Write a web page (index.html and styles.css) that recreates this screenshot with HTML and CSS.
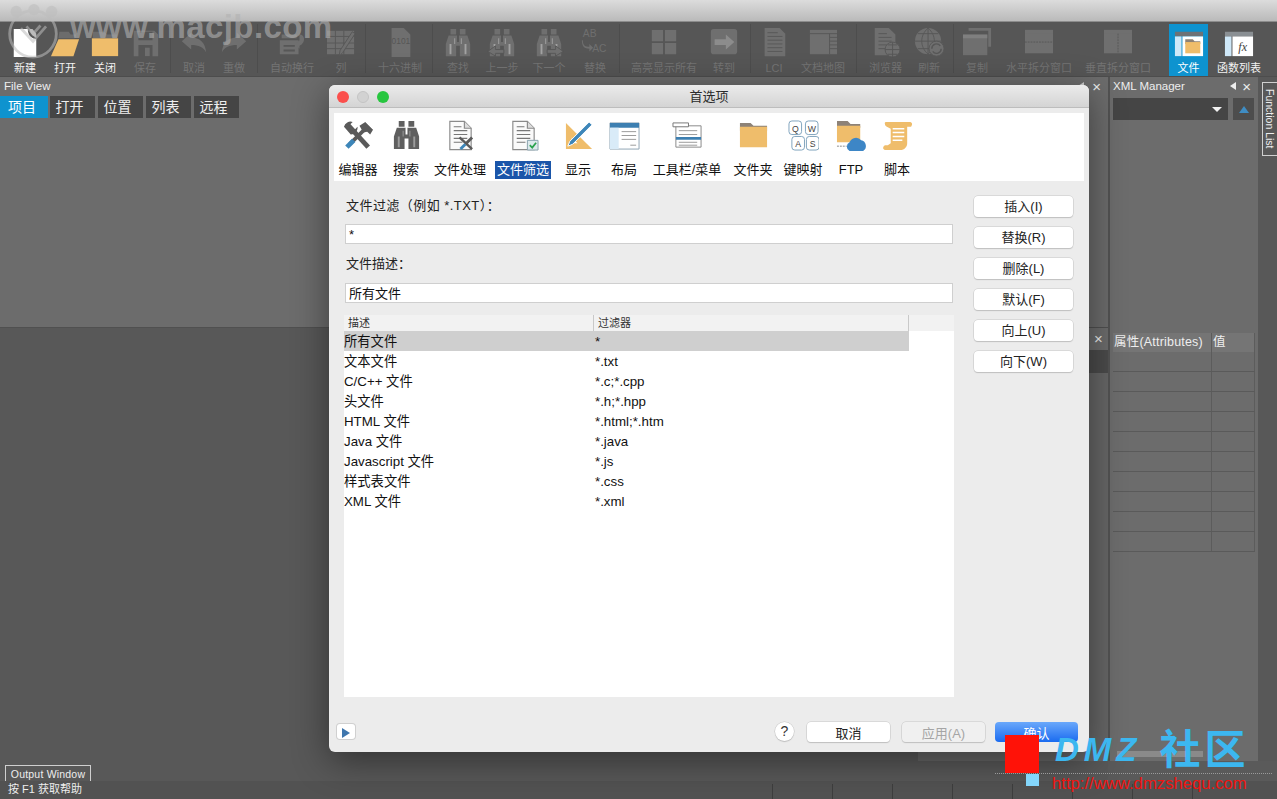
FILE: index.html
```html
<!DOCTYPE html>
<html lang="zh">
<head>
<meta charset="utf-8">
<title>首选项</title>
<link rel="stylesheet" href="styles.css">
</head>
<body>
<svg class="defs" width="0" height="0">
  <symbol id="bino" viewBox="0 0 32 32">
    <path d="M8 1h6v6H8zM18 1h6v6h-6z"/>
    <path d="M6 8h9v7h2V8h9l3 9v13H18V19h-4v11H3V17z"/>
    <path d="M7 17h2v11H7zM23 17h2v11h-2zM12 11h1v6h-1zM19 11h1v6h-1z" fill="#c4c4c4" opacity=".6"/>
  </symbol>
  <symbol id="doc" viewBox="0 0 32 32">
    <path d="M5 1.500h15l7 7v22H5z" fill="#fafafa" stroke="#8a8a8a" stroke-width="1.200"/>
    <path d="M20 1.500v7h7" fill="#ddd" stroke="#8a8a8a" stroke-width="1.200"/>
    <path d="M9 7h8M9 11h14M9 15h14M9 19h14M9 23h9" stroke="#777" stroke-width="1.200"/>
  </symbol>
  <symbol id="fold" viewBox="0 0 32 32">
    <path d="M2 3h11l3 3h14v5H2z" fill="#8d8277"/>
    <path d="M2 7h28v21H2z" fill="#efbd6b"/>
  </symbol>
  <symbol id="pane" viewBox="0 0 32 32">
    <path d="M1 2h30v25H1z"/>
    <path d="M1 2h30v4H1z" opacity=".7"/>
  </symbol>
</svg>

<div class="app">
  <header class="titlebar"></header>

  <nav class="toolbar">
    <div class="tool w40"><svg class="ti" viewBox="0 0 32 32"><path d="M4 1h15c0 6 3 10 9 11v19H4z" fill="#fff"/><path d="M21 1c0 4 3 8 7 9V6l-4-5z" fill="#bbb"/></svg><span>新建</span></div>
    <div class="tool w40"><svg class="ti" viewBox="0 0 32 32"><path d="M10 4h10l2 3h6l-1 4H9z" fill="#6c6c6c"/><path d="M9 12h22l-6 18H1z" fill="#efbd6b"/></svg><span>打开</span></div>
    <div class="tool w40"><svg class="ti" viewBox="0 0 32 32"><path d="M3 4h12l3 3h11v4H3z" fill="#6c6c6c"/><path d="M2 11h28v19H2z" fill="#efbd6b"/></svg><span>关闭</span></div>
    <div class="tool w40 dim"><svg class="ti" viewBox="0 0 32 32"><path fill-rule="evenodd" d="M4 3h22l4 4v23H4zM9 4v9h15V4zM9 18v12h15V18z"/><path d="M16 21h5v9h-5z"/></svg><span>保存</span></div>
    <i class="sep shift-2"></i>
    <div class="tool w40 dim"><svg class="ti" viewBox="0 0 32 32"><path d="M3 14 13 5v5c9 0 15 5 16 16-3-6-8-8-16-8v5z"/></svg><span>取消</span></div>
    <div class="tool w40 dim"><svg class="ti" viewBox="0 0 32 32"><path d="M29 14 19 5v5c-9 0-15 5-16 16 3-6 8-8 16-8v5z"/></svg><span>重做</span></div>
    <i class="sep"></i>
    <div class="tool dim"><svg class="ti" viewBox="0 0 32 32"><path d="M5 7h16v4H5zM3 13h20v15H3z"/><path d="M7 18h12v2H7zM7 23h12v2H7z" fill="#575757"/><path d="M24 7c6 0 7 9 0 12v3l-5-5 5-4z"/></svg><span>自动换行</span></div>
    <div class="tool w40 dim pull-2"><svg class="ti" viewBox="0 0 32 32"><path d="M1 3h29v25H1z"/><path d="M10 3v25M19 3v25M1 9h29M1 16h29M1 22h29" stroke="#575757"/><path d="M31 6 18 26l-4 4 1-6L28 4z" stroke="#575757"/></svg><span>列</span></div>
    <i class="sep shift-1"></i>
    <div class="tool dim"><svg class="ti" viewBox="0 0 32 32"><path d="M7 0h13l7 7v24H7z"/><text x="17" y="17" class="hex">0101</text></svg><span>十六进制</span></div>
    <i class="sep sep-b"></i>
    <div class="tool w44 dim"><svg class="ti"><use href="#bino"/></svg><span>查找</span></div>
    <div class="tool w44 dim"><svg class="ti" viewBox="0 0 32 32"><use href="#bino"/><path d="M1 25 9 19v4h9v4H9v3z" fill="#707070" stroke="#575757"/></svg><span>上一步</span></div>
    <div class="tool w44 dim shift-3"><svg class="ti" viewBox="0 0 32 32"><use href="#bino"/><path d="M31 25l-8-6v4h-9v4h9v3z" fill="#707070" stroke="#575757"/></svg><span>下一个</span></div>
    <div class="tool w44 dim shift-2"><svg class="ti" viewBox="0 0 32 32"><text x="3" y="10" class="abac">AB</text><text x="13" y="26" class="abac">AC</text><path d="M3 13c0 6 3 7 7 7v-3l4 4-4 4v-3c-5 0-8-2-8-9z"/></svg><span>替换</span></div>
    <i class="sep sep-c"></i>
    <div class="tool dim"><svg class="ti" viewBox="0 0 32 32"><path d="M3 2h12v12H3zM17 2h12v12H17zM3 16h12v12H3zM17 16h12v12H17z"/></svg><span>高亮显示所有</span></div>
    <div class="tool w40 dim pull-2"><svg class="ti" viewBox="0 0 32 32"><rect x="2" y="1" width="28" height="27" rx="3"/><path d="M6 12h12V7l9 8-9 8v-5H6z" fill="#8c8c8c"/></svg><span>转到</span></div>
    <i class="sep shift-3"></i>
    <div class="tool w40 dim"><svg class="ti" viewBox="0 0 32 32"><path d="M6 0h16l6 6v24H6z"/><path d="M9 5h11M9 9h16M9 13h16M9 17h16M9 21h16M9 25h16" stroke="#575757"/></svg><span>LCI</span></div>
    <div class="tool dim pull-2"><svg class="ti" viewBox="0 0 32 32"><path d="M2 2h29v26H2z"/><path d="M23 6v22M23 10h8M23 14h8M23 18h8M23 22h8M2 6h29" stroke="#575757"/></svg><span>文档地图</span></div>
    <i class="sep pull-1"></i>
    <div class="tool dim"><svg class="ti" viewBox="0 0 32 32"><path d="M4 0h15l7 7v22H4z"/><path d="M8 6h9M8 10h14M8 14h14M8 18h9M8 22h8" stroke="#575757"/><circle cx="23" cy="23" r="8" stroke="#575757"/><path d="M15 23h16M23 15v16M18 18h10M18 28h10" stroke="#575757"/></svg><span>浏览器</span></div>
    <div class="tool w40 dim pull-2"><svg class="ti" viewBox="0 0 32 32"><circle cx="15" cy="14" r="14"/><path d="M1 14h28M15 0v28M4 6h22M4 22h22M15 0c-9 8-9 20 0 28M15 0c9 8 9 20 0 28" stroke="#575757" fill="none"/><circle cx="24" cy="22" r="8" stroke="#575757"/><path d="M19 22a5 5 0 0 1 9-3M29 22a5 5 0 0 1-9 3" stroke="#575757" fill="none" stroke-width="1.500"/></svg><span>刷新</span></div>
    <i class="sep shift-1"></i>
    <div class="tool w40 dim"><svg class="ti" viewBox="0 0 32 32"><path d="M7 0h24v20h-3V3H7z"/><path d="M1 7h26v22H1z"/><path d="M1 7h26v4H1z" fill="#7f7f7f"/></svg><span>复制</span></div>
    <div class="tool dim"><svg class="ti wide" viewBox="0 0 32 32"><use href="#pane"/><path d="M1 15h30" stroke="#575757" stroke-dasharray="2 1"/></svg><span>水平拆分窗口</span></div>
    <div class="tool dim push pull-5"><svg class="ti wide" viewBox="0 0 32 32"><use href="#pane"/><path d="M16 6v21" stroke="#575757" stroke-dasharray="2 1"/></svg><span>垂直拆分窗口</span></div>
    <div class="tool active"><svg class="ti" viewBox="0 0 32 32"><path d="M1 4h30v5H1z" fill="#6d7276"/><path d="M1 9h7v21H1z" fill="#cfe8f8"/><path d="M9 9h22v21H9z" fill="#fff"/><path d="M12 12h8l2 2h6v3H12z" fill="#8d8277"/><path d="M12 15h16v12H12z" fill="#efbd6b"/></svg><span>文件</span></div>
    <div class="tool"><svg class="ti" viewBox="0 0 32 32"><path d="M1 4h30v5H1z" fill="#8a8f93"/><path d="M1 9h7v21H1z" fill="#cfe8f8"/><path d="M9 9h22v21H9z" fill="#fff"/><text x="20" y="25" class="fx">fx</text></svg><span>函数列表</span></div>
  </nav>

  <main class="workspace">
    <section class="left">
      <div class="file-view">
        <div class="panel-head">
          <span>File View</span>
          <span class="ctl"><i class="tri"></i><i class="x">×</i></span>
        </div>
        <div class="tabs">
          <span class="tab on">项目</span>
          <span class="tab">打开</span>
          <span class="tab">位置</span>
          <span class="tab">列表</span>
          <span class="tab">远程</span>
        </div>
      </div>
      <div class="editor">
        <div class="editor-main">
          <div class="output-row">
            <span class="output-tab">Output Window</span>
            <span class="output-band"></span>
          </div>
        </div>
        <div class="stub">
          <div class="stub-x">×</div>
          <div class="stub-dark"></div>
          <div class="stub-rest"></div>
        </div>
      </div>
    </section>

    <aside class="xml">
      <div class="panel-head">
        <span>XML Manager</span>
        <span class="ctl ctl-xml"><i class="tri tri-w"></i><i class="x">×</i></span>
      </div>
      <div class="xml-select">
        <div class="combo"><i class="down"></i></div>
        <div class="up-btn"><i class="up"></i></div>
      </div>
      <div class="attrs">
        <div class="attr-row attr-head"><span>属性(Attributes)</span><span>值</span></div>
        <div class="attr-row"><span></span><span></span></div>
        <div class="attr-row"><span></span><span></span></div>
        <div class="attr-row"><span></span><span></span></div>
        <div class="attr-row"><span></span><span></span></div>
        <div class="attr-row"><span></span><span></span></div>
        <div class="attr-row"><span></span><span></span></div>
        <div class="attr-row"><span></span><span></span></div>
        <div class="attr-row"><span></span><span></span></div>
        <div class="attr-row"><span></span><span></span></div>
        <div class="attr-row"><span></span><span></span></div>
      </div>
      <div class="hscroll"></div>
    </aside>

    <div class="strip"><span class="fn-tab">Function List</span></div>
  </main>

  <footer class="statusbar">
    <span class="status-text">按 F1 获取帮助</span>
    <div class="cells">
      <i></i><i></i><i></i><i></i><i></i><i></i><i></i><i></i>
    </div>
  </footer>

  <section class="dialog">
    <div class="dlg-title">
      <span class="lights"><i class="red"></i><i class="grey"></i><i class="green"></i></span>
      <span>首选项</span>
    </div>
    <div class="prefs">
      <div class="pref"><svg class="pi" viewBox="0 0 32 32"><path d="M5 5l21 23" stroke="#5a5a5a" stroke-width="5"/><path d="M1 7a7 7 0 0 1 9-5L6 6l1 4 4 1 4-4a7 7 0 0 1-7 8z" fill="#5a5a5a"/><path d="M24 8 7 25" stroke="#5a5a5a" stroke-width="4"/><path d="M11 21 4 28" stroke="#3d86b9" stroke-width="5"/><path d="M17 6l6-4 8 8-3 5-3-3-4 1z" fill="#5a5a5a"/></svg><span>编辑器</span></div>
      <div class="pref"><svg class="pi bino"><use href="#bino"/></svg><span>搜索</span></div>
      <div class="pref"><svg class="pi" viewBox="0 0 32 32"><use href="#doc"/><path d="M15 18l13 12" stroke="#5a5a5a" stroke-width="2.500"/><path d="M28 18 21 25" stroke="#5a5a5a" stroke-width="3"/><path d="M21 25l-5 5" stroke="#3d86b9" stroke-width="3"/></svg><span>文件处理</span></div>
      <div class="pref"><svg class="pi" viewBox="0 0 32 32"><use href="#doc"/><path d="M20 21h11v10H20z" fill="#dce9ec" stroke="#87a1ad"/><path d="M22.500 26l2.500 2.500 4-5" fill="none" stroke="#2ba24f" stroke-width="1.800"/></svg><span class="sel">文件筛选</span></div>
      <div class="pref"><svg class="pi" viewBox="0 0 32 32"><path d="M3 3l27 27H3z" fill="#efbd6b"/><path d="M9 18l6 6H9z" fill="#fff"/><path d="M27 2l3 3L10 25l-5 2 2-5z" fill="#3d86b9" stroke="#fff"/></svg><span>显示</span></div>
      <div class="pref"><svg class="pi" viewBox="0 0 32 32"><path d="M1 3h30v27H1z" fill="#fff" stroke="#90a4b4"/><path d="M1 3h30v5H1z" fill="#3d7fb1"/><path d="M1 8h9v22H1z" fill="#d9ebf8"/><path d="M13 12h15M13 16h15M13 20h15M22 26h6" stroke="#999"/></svg><span>布局</span></div>
      <div class="pref"><svg class="pi" viewBox="0 0 32 32"><path d="M4 6h26v22H4z" fill="#fff" stroke="#888"/><path d="M1 3h16v4H1z" fill="#fff" stroke="#777"/><path d="M7 11h19M7 15h19M7 23h19M7 26h19" stroke="#999"/><path d="M4 17.500h26v3H4z" fill="#3d7fb1"/></svg><span>工具栏/菜单</span></div>
      <div class="pref"><svg class="pi" viewBox="0 0 32 32"><use href="#fold"/></svg><span>文件夹</span></div>
      <div class="pref"><svg class="pi" viewBox="0 0 32 32"><g fill="#fff" stroke="#7fa3bd"><rect x="1" y="1" width="13" height="14" rx="3"/><rect x="18" y="1" width="13" height="14" rx="3"/><rect x="4" y="17" width="13" height="14" rx="3"/><rect x="19" y="17" width="13" height="14" rx="3"/></g><text x="7.500" y="12" class="key">Q</text><text x="24.500" y="12" class="key">W</text><text x="10.500" y="28" class="key">A</text><text x="25.500" y="28" class="key">S</text></svg><span>键映射</span></div>
      <div class="pref"><svg class="pi" viewBox="0 0 32 32"><path d="M1 1h11l3 3h10v4H1z" fill="#8d8277"/><path d="M1 6h24v17H1z" fill="#efbd6b"/><path d="M1 27h10" stroke="#888" stroke-dasharray="2 1"/><path d="M14 32a5 5 0 0 1 0-9 7 7 0 0 1 12-2 6 6 0 0 1 2 11z" fill="#3d86c6"/></svg><span>FTP</span></div>
      <div class="pref"><svg class="pi" viewBox="0 0 32 32"><path d="M4 2h24c3 0 4 2 2 5h-4v17c0 4-3 7-7 7H4c-3 0-4-3-1-5h3l3-2V9L5 7C3 6 2 2 4 2z" fill="#efbd6b"/><path d="M11 9h12M11 13h12M11 17h12M11 21h10" stroke="#fff" stroke-width="1.500"/></svg><span>脚本</span></div>
    </div>

    <div class="dlg-body">
      <div class="form">
        <label class="lbl lbl-wide">文件过滤（例如 *.TXT）：</label>
        <div class="input">*</div>
        <label class="lbl lbl-2">文件描述：</label>
        <div class="input">所有文件</div>
        <div class="table">
          <div class="thead"><span>描述</span><span>过滤器</span><span></span></div>
          <div class="trow selrow"><span>所有文件</span><span>*</span></div>
          <div class="trow"><span>文本文件</span><span>*.txt</span></div>
          <div class="trow"><span>C/C++ 文件</span><span>*.c;*.cpp</span></div>
          <div class="trow"><span>头文件</span><span>*.h;*.hpp</span></div>
          <div class="trow"><span>HTML 文件</span><span>*.html;*.htm</span></div>
          <div class="trow"><span>Java 文件</span><span>*.java</span></div>
          <div class="trow"><span>Javascript 文件</span><span>*.js</span></div>
          <div class="trow"><span>样式表文件</span><span>*.css</span></div>
          <div class="trow"><span>XML 文件</span><span>*.xml</span></div>
        </div>
      </div>
      <div class="side-btns">
        <button class="btn">插入(I)</button>
        <button class="btn">替换(R)</button>
        <button class="btn">删除(L)</button>
        <button class="btn">默认(F)</button>
        <button class="btn">向上(U)</button>
        <button class="btn">向下(W)</button>
      </div>
    </div>

    <div class="dlg-foot">
      <button class="play"><i></i></button>
      <span class="spacer"></span>
      <button class="help">?</button>
      <button class="btn foot-btn">取消</button>
      <button class="btn foot-btn off">应用(A)</button>
      <button class="btn foot-btn primary">确认</button>
    </div>
  </section>

  <div class="wm-macjb">
    <svg class="wm-logo" viewBox="0 0 60 60"><g fill="none" stroke="#bdbdbd" stroke-width="3"><circle cx="30" cy="32" r="25"/><path d="M17 26l13 14 14-16M23 24l7 8 8-9"/></g><g fill="#bdbdbd"><circle cx="12" cy="8" r="6"/><circle cx="31" cy="6" r="6"/><circle cx="50" cy="8" r="6"/></g></svg>
    <span>www.macjb.com</span>
  </div>

  <div class="wm-dmz">
    <i class="wm-red"></i>
    <i class="wm-blue"></i>
    <span class="wm-line"></span>
    <span class="wm-name"><b>DMZ</b><em>社区</em></span>
    <span class="wm-url">http://www.dmzshequ.com</span>
  </div>
</div>
</body>
</html>
```

FILE: styles.css
```css
* { box-sizing: border-box; }
html, body { margin: 0; padding: 0; }
body {
  font-family: "Liberation Sans", "Noto Sans CJK SC", sans-serif;
  background: #5a5a5a;
  overflow: hidden;
}
i { font-style: normal; display: block; }
.defs { position: absolute; }

.app {
  position: relative;
  width: 1277px;
  height: 799px;
  display: flex;
  flex-direction: column;
  overflow: hidden;
  background: #5a5a5a;
}
.titlebar {
  height: 22px;
  flex: none;
  background: linear-gradient(#dcdcdc, #bababa);
  border-bottom: 1px solid #8c8c8c;
}

/* toolbar */
.toolbar {
  height: 55px;
  flex: none;
  display: flex;
  padding-left: 5px;
  background: #565656;
  border-bottom: 1px solid #4d4d4d;
}
.tool {
  display: flex;
  flex-direction: column;
  align-items: center;
  padding: 6px 9px 0;
  color: #f2f2f2;
  font-size: 11px;
  line-height: 16px;
}
.tool span { margin-top: 2px; white-space: nowrap; }
.w40 { width: 40px; padding-left: 0; padding-right: 0; }
.w44 { width: 44px; padding-left: 0; padding-right: 0; }
.ti { width: 30px; height: 30px; fill: currentColor; flex: none; }
.ti.wide { width: 32px; }
.tool.dim { color: #747474; }
.tool.dim .ti { fill: #6f6f6f; }
.tool.active { background: #0e93cf; color: #fff; width: 39px; padding-left: 0; padding-right: 0; margin-top: 2px; padding-top: 4px; }
.push { margin-right: 9px; }
.sep { width: 1px; margin: 2px 3px 3px; background: #4d4d4d; flex: none; }
.sep-b { margin-left: 1px; margin-right: 3px; }
.sep-c { margin-left: 2px; margin-right: 2px; }
.shift-1 { margin-left: 4px; }
.shift-2 { margin-left: 2px; }
.shift-3 { margin-left: 3px; }
.sep.shift-2 { margin-left: 5px; }
.sep.shift-3 { margin-left: 6px; }
.pull-1 { margin-left: 2px; }
.pull-2 { margin-left: -2px; }
.pull-5 { margin-left: -5px; }
.hex { font: 9px "Liberation Sans", sans-serif; fill: #565656; text-anchor: middle; }
.abac { font: 11px "Liberation Sans", sans-serif; fill: #6f6f6f; }
.fx { font: italic 13px "Liberation Serif", serif; fill: #444; text-anchor: middle; }

/* workspace */
.workspace { flex: 1; display: flex; min-height: 0; }
.left { width: 1108px; display: flex; flex-direction: column; flex: none; }
.file-view { height: 251px; flex: none; background: #6c6c6c; border-bottom: 1px solid #505050; }
.panel-head {
  height: 18px;
  display: flex;
  justify-content: space-between;
  align-items: center;
  padding: 0 7px 0 4px;
  color: #eee;
  font-size: 11.500px;
}
.ctl { display: flex; align-items: center; gap: 8px; }
.tri { width: 0; height: 0; border: 4px solid transparent; border-right: 6px solid #ccc; border-left: 0; }
.tri-w { border-right-color: #eee; }
.x { color: #eee; font-size: 15px; line-height: 15px; }
.tabs { display: flex; gap: 3px; margin-top: 1px; }
.tab {
  width: 45px;
  height: 22px;
  padding-right: 6px;
  background: #454545;
  color: #eee;
  font-size: 14px;
  line-height: 22px;
  text-align: center;
}
.tab.on { width: 48px; margin-right: -1px; padding-right: 4px; background: #0e93cf; color: #fff; }

.editor { flex: 1; display: flex; min-height: 0; background: #585858; }
.editor-main { flex: 1; display: flex; flex-direction: column; justify-content: flex-end; }
.output-row { display: flex; align-items: flex-end; padding-left: 5px; }
.output-tab {
  width: 86px;
  height: 16px;
  border: 1px solid #cfcfcf;
  border-bottom: 0;
  color: #eee;
  font-size: 10.500px;
  line-height: 16px;
  text-align: center;
  letter-spacing: .2px;
}
.output-band { height: 40px; width: 171px; margin: 0 0 20px auto; background: #666; }
.stub { width: 19px; display: flex; flex-direction: column; padding-bottom: 20px; background: #585858; }
.stub-x { height: 22px; color: #eee; font-size: 15px; line-height: 22px; text-align: center; background: #6c6c6c; }
.stub-dark { height: 23px; background: #4b4b4b; }
.stub-rest { flex: 1; background: #666; }

/* xml panel */
.xml {
  width: 150px;
  flex: none;
  display: flex;
  flex-direction: column;
  margin-bottom: 20px;
  background: #6c6c6c;
  border-left: 2px solid #525252;
  padding-left: 3px;
}
.xml .panel-head { padding: 0 5px 0 0; margin-right: 2px; }
.ctl-xml { gap: 6px; }
.xml-select { display: flex; gap: 5px; margin-top: 3px; padding-right: 4px; }
.combo { width: 115px; height: 22px; display: flex; align-items: center; justify-content: flex-end; padding-right: 6px; background: #454545; }
.down { width: 0; height: 0; border: 5px solid transparent; border-top: 5px solid #f2f2f2; border-bottom: 0; }
.up-btn { width: 21px; height: 22px; display: flex; align-items: center; justify-content: center; background: #4d4d4d; }
.up { width: 0; height: 0; border: 5px solid transparent; border-bottom: 7px solid #3f8dc4; border-top: 0; }
.attrs { margin-top: 213px; width: 142px; }
.attr-row { display: grid; grid-template-columns: 99px 43px; height: 20px; border-bottom: 1px solid #5a5a5a; }
.attr-row span { border-right: 1px solid #5c5c5c; }
.attr-head { height: 19px; background: #757575; color: #eee; font-size: 12.500px; line-height: 18px; letter-spacing: .2px; border-bottom: 0; white-space: nowrap; }
.attr-head span { padding-left: 1px; }
.hscroll { height: 6px; width: 86px; margin: auto 0 4px 4px; background: #8a8a8a; }

.strip { flex: 1; padding: 5px 0 0 4px; background: #585858; margin-bottom: 20px; }
.fn-tab {
  display: block;
  writing-mode: vertical-rl;
  height: 74px;
  border: 1px solid #d0d0d0;
  border-right: 0;
  color: #eee;
  font-size: 10.500px;
  line-height: 14px;
  text-align: center;
}

/* status */
.statusbar {
  height: 18px;
  flex: none;
  display: flex;
  justify-content: space-between;
  padding-left: 8px;
  background: #525252;
}
.status-text { color: #eee; font-size: 11px; line-height: 17px; }
.cells { display: flex; margin-right: 25px; }
.cells i { width: 60px; margin-top: 3px; border-left: 1px solid #3e3e3e; }

/* dialog */
.dialog {
  position: absolute;
  left: 329px;
  top: 85px;
  width: 760px;
  height: 667px;
  display: flex;
  flex-direction: column;
  background: #ececec;
  border-radius: 6px;
  box-shadow: 0 8px 36px rgba(0, 0, 0, .45);
  overflow: hidden;
}
.dlg-title {
  position: relative;
  height: 23px;
  flex: none;
  background: linear-gradient(#ebebeb, #d4d4d4);
  border-bottom: 1px solid #bdbdbd;
  color: #2b2b2b;
  font-size: 13px;
  line-height: 23px;
  text-align: center;
}
.lights { position: absolute; left: 8px; top: 6px; display: flex; gap: 8px; }
.lights i { width: 12px; height: 12px; border-radius: 50%; }
.red { background: #fb4f4c; }
.grey { background: #d2d2d2; border: 1px solid #c4c4c4; }
.green { background: #27c63f; }

.prefs {
  height: 68px;
  flex: none;
  margin: 5px 5px 0;
  display: grid;
  grid-template-columns: 48px 48px 60px 66px 44px 48px 78px 54px 46px 50px 42px;
  justify-content: start;
  background: #fff;
}
.pref { display: flex; flex-direction: column; align-items: center; padding-top: 7px; color: #111; font-size: 13px; line-height: 18px; white-space: nowrap; }
.pref span { margin-top: 10px; padding: 0 2px; }
.pref span.sel { background: #1a55a9; color: #fff; }
.pi { width: 31px; height: 31px; flex: none; }
.pi.bino { fill: #5f5f5f; }
.key { font: 9px "Liberation Sans", sans-serif; fill: #444; text-anchor: middle; }

.dlg-body { display: flex; flex: none; height: 516px; padding-left: 15px; }
.form { width: 610px; padding-top: 16px; }
.lbl { display: block; padding-left: 2px; color: #222; font-size: 13px; line-height: 18px; }
.lbl-wide { letter-spacing: .45px; }
.lbl-2 { margin-top: 11px; }
.input {
  width: 608px;
  height: 20px;
  margin: 9px 0 0 1px;
  padding-left: 3px;
  background: #fff;
  border: 1px solid #cfcfcf;
  color: #111;
  font-size: 13px;
  line-height: 20px;
}
.lbl-2 + .input { margin-top: 10px; }
.table { height: 382px; margin-top: 12px; background: #fff; }
.thead {
  display: grid;
  grid-template-columns: 250px 315px 45px;
  height: 16px;
  background: #f2f2f2;
  color: #333;
  font-size: 11px;
  line-height: 16px;
}
.thead span { padding-left: 4px; border-right: 1px solid #c9c9c9; }
.thead span:last-child { border-right: 0; }
.trow {
  display: grid;
  grid-template-columns: 250px 315px;
  width: 565px;
  height: 20px;
  color: #111;
  font-size: 13.300px;
  line-height: 22px;
}
.trow span:last-child { padding-left: 1px; }
.selrow { background: #cfcfcf; }

.side-btns { display: flex; flex-direction: column; gap: 10px; margin-left: 20px; padding-top: 15px; }
.btn {
  width: 99px;
  height: 21px;
  padding: 0 0 2px;
  border: 0;
  border-radius: 4px;
  background: #fff;
  box-shadow: 0 0 0 .5px #c6c6c6, 0 1px 1px #bdbdbd;
  color: #222;
  font: 13px "Liberation Sans", "Noto Sans CJK SC", sans-serif;
}

.dlg-foot { flex: 1; display: flex; align-items: flex-start; padding: 25px 11px 0 8px; }
.spacer { flex: 1; }
.play {
  width: 18px;
  height: 15px;
  margin-top: 2px;
  padding: 3px 0 0 5px;
  border: 0;
  border-radius: 3px;
  background: #fff;
  box-shadow: 0 0 0 1px #d0d0d0;
}
.play i { width: 0; height: 0; border: 5px solid transparent; border-left: 8px solid #3f76ad; border-right: 0; }
.help {
  width: 19px;
  height: 19px;
  margin: 0 13px 0 0;
  padding: 0;
  border: 0;
  border-radius: 50%;
  background: #fff;
  box-shadow: 0 0 0 .5px #c6c6c6, 0 1px 1px #bdbdbd;
  color: #333;
  font: 14px/19px "Liberation Sans", sans-serif;
}
.foot-btn { width: 83px; height: 20px; padding-bottom: 0; }
.foot-btn + .foot-btn { margin-left: 12px; }
.foot-btn.primary { margin-left: 10px; background: linear-gradient(#6aa8fb, #1a6bf0); color: #fff; box-shadow: none; }
.foot-btn.off { background: #f0f0f0; color: #a5a5a5; }

/* watermarks */
.wm-macjb {
  position: absolute;
  left: 5px;
  top: 2px;
  display: flex;
  align-items: flex-start;
  gap: 9px;
  color: rgba(178, 178, 178, .62);
  font-size: 33px;
  font-weight: bold;
  line-height: 50px;
  letter-spacing: .4px;
}
.wm-logo { width: 56px; height: 60px; opacity: .55; }
.wm-dmz { position: absolute; left: 995px; top: 735px; width: 277px; height: 60px; }
.wm-red { position: absolute; left: 10px; top: 0; width: 34px; height: 38px; background: #ff1208; }
.wm-blue { position: absolute; left: 31px; top: 39px; width: 13px; height: 12px; background: #84d6fb; }
.wm-line { position: absolute; left: 0; right: 0; top: 38px; border-top: 1px dotted #9a9a9a; }
.wm-name {
  position: absolute;
  left: 60px;
  top: -7px;
  display: flex;
  align-items: center;
  gap: 18px;
  color: #3cb7f0;
  line-height: 44px;
  white-space: nowrap;
}
.wm-name b { font-style: italic; letter-spacing: 5px; font-size: 33px; }
.wm-name em { font-style: normal; font-weight: bold; font-size: 41px; letter-spacing: 4px; }
.wm-url {
  position: absolute;
  left: 57px;
  top: 40px;
  color: #f01410;
  font-size: 16.700px;
  line-height: 18px;
  white-space: nowrap;
}
```
